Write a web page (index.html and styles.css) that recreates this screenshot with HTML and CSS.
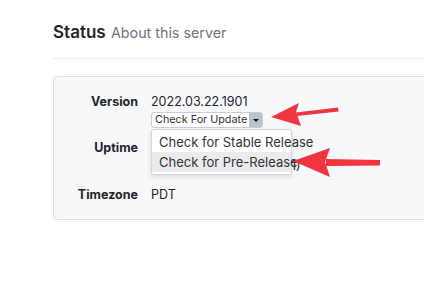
FILE: index.html
```html
<!DOCTYPE html>
<html lang="en">
<head>
  <meta charset="UTF-8">
  <title>Status</title>
  <link rel="stylesheet" href="styles.css">
</head>
<body>

  <div class="page">
    <h2 class="title">Status <small>About this server</small></h2>
    <hr>

    <div class="card">
      <div class="info">
        <div class="label">Version</div>
        <div class="value">
          2022.03.22.1901
          <div class="picker">
            <div class="select">
              <span>Check For Update</span>
              <span class="caret"></span>
            </div>
            <ul class="menu">
              <li>Check for Stable Release</li>
              <li class="active">Check for Pre-Release</li>
            </ul>
          </div>
        </div>

        <div class="label">Uptime</div>
        <div class="value">
          6 days, 3 hours<br>
          (since 2022-03-22 19:01)
        </div>

        <div class="label">Timezone</div>
        <div class="value">PDT</div>
      </div>
    </div>
  </div>

  <!-- annotation arrows -->
  <svg class="callouts" width="424" height="293" viewBox="0 0 424 293">
    <polygon points="296,112.5 338,107.5 338.5,111.5 297,116" fill="#f2343f"/>
    <polygon points="271,117 299,103 296,112 301,126" fill="#f2343f"/>
    <polygon points="326,159 380,160 380,165.5 326,166" fill="#f2343f"/>
    <polygon points="293,161 330,148 325,162 330,177" fill="#f2343f"/>
  </svg>

</body>
</html>
```

FILE: styles.css
```css
html,
body {
  margin: 0;
  overflow: hidden;
}

body {
  font-family: Inter, "Liberation Sans", Arial, sans-serif;
  background: #fff;
  color: #212529;
  width: 424px;
  height: 293px;
  position: relative;
}

.page {
  padding-left: 53px;
  overflow: hidden;
}

.title {
  margin: 20px 0 0;
  font-size: 17px;
  line-height: 24px;
  font-weight: 600;
}

.title small {
  font-size: 14.3px;
  font-weight: 400;
  color: #6c757d;
  margin-left: 1px;
}

hr {
  border: none;
  border-top: 1px solid #e9ecef;
  margin: 13px 0 0;
}

.card {
  margin-top: 17px;
  margin-right: -6px;
  background: #f7f8fa;
  border: 1px solid #dcdfe3;
  border-radius: 4px;
  padding: 16px 0 15px;
}

.info {
  display: grid;
  grid-template-columns: 84px 1fr;
  column-gap: 13px;
  row-gap: 11px;
  font-size: 12.5px;
  line-height: 18px;
}

.label {
  text-align: right;
  font-weight: 700;
}

.value {
  white-space: nowrap;
}

.picker {
  position: relative;
  margin-top: 1px;
  width: 112px;
}

.select {
  display: flex;
  align-items: stretch;
  height: 16px;
  background: #fff;
  border: 1px solid #c9cdd2;
  border-radius: 3px;
  box-sizing: border-box;
  font-size: 10.8px;
  line-height: 14px;
  color: #333;
  overflow: hidden;
}

.select span:first-child {
  flex: 1;
  padding-left: 3px;
  white-space: nowrap;
  overflow: hidden;
}

.caret {
  width: 13px;
  flex: none;
  background: #bcc2c9;
  display: flex;
  align-items: center;
  justify-content: center;
}

.caret::after {
  content: "";
  border-left: 3px solid transparent;
  border-right: 3px solid transparent;
  border-top: 3px solid #111;
}

.menu {
  position: absolute;
  top: 17px;
  left: 0;
  width: 141px;
  margin: 0;
  padding: 2px 0;
  list-style: none;
  background: #fff;
  border: 1px solid #d4d6da;
  border-radius: 3px;
  box-shadow: 0 2px 5px rgba(0,0,0,0.12);
  box-sizing: border-box;
  font-size: 13px;
  color: #333;
  z-index: 2;
}

.menu li {
  padding: 0 7px;
  line-height: 20px;
  white-space: nowrap;
}

.menu li.active {
  background: #e9ebef;
}

.callouts {
  position: absolute;
  top: 0;
  left: 0;
  z-index: 5;
}
```
